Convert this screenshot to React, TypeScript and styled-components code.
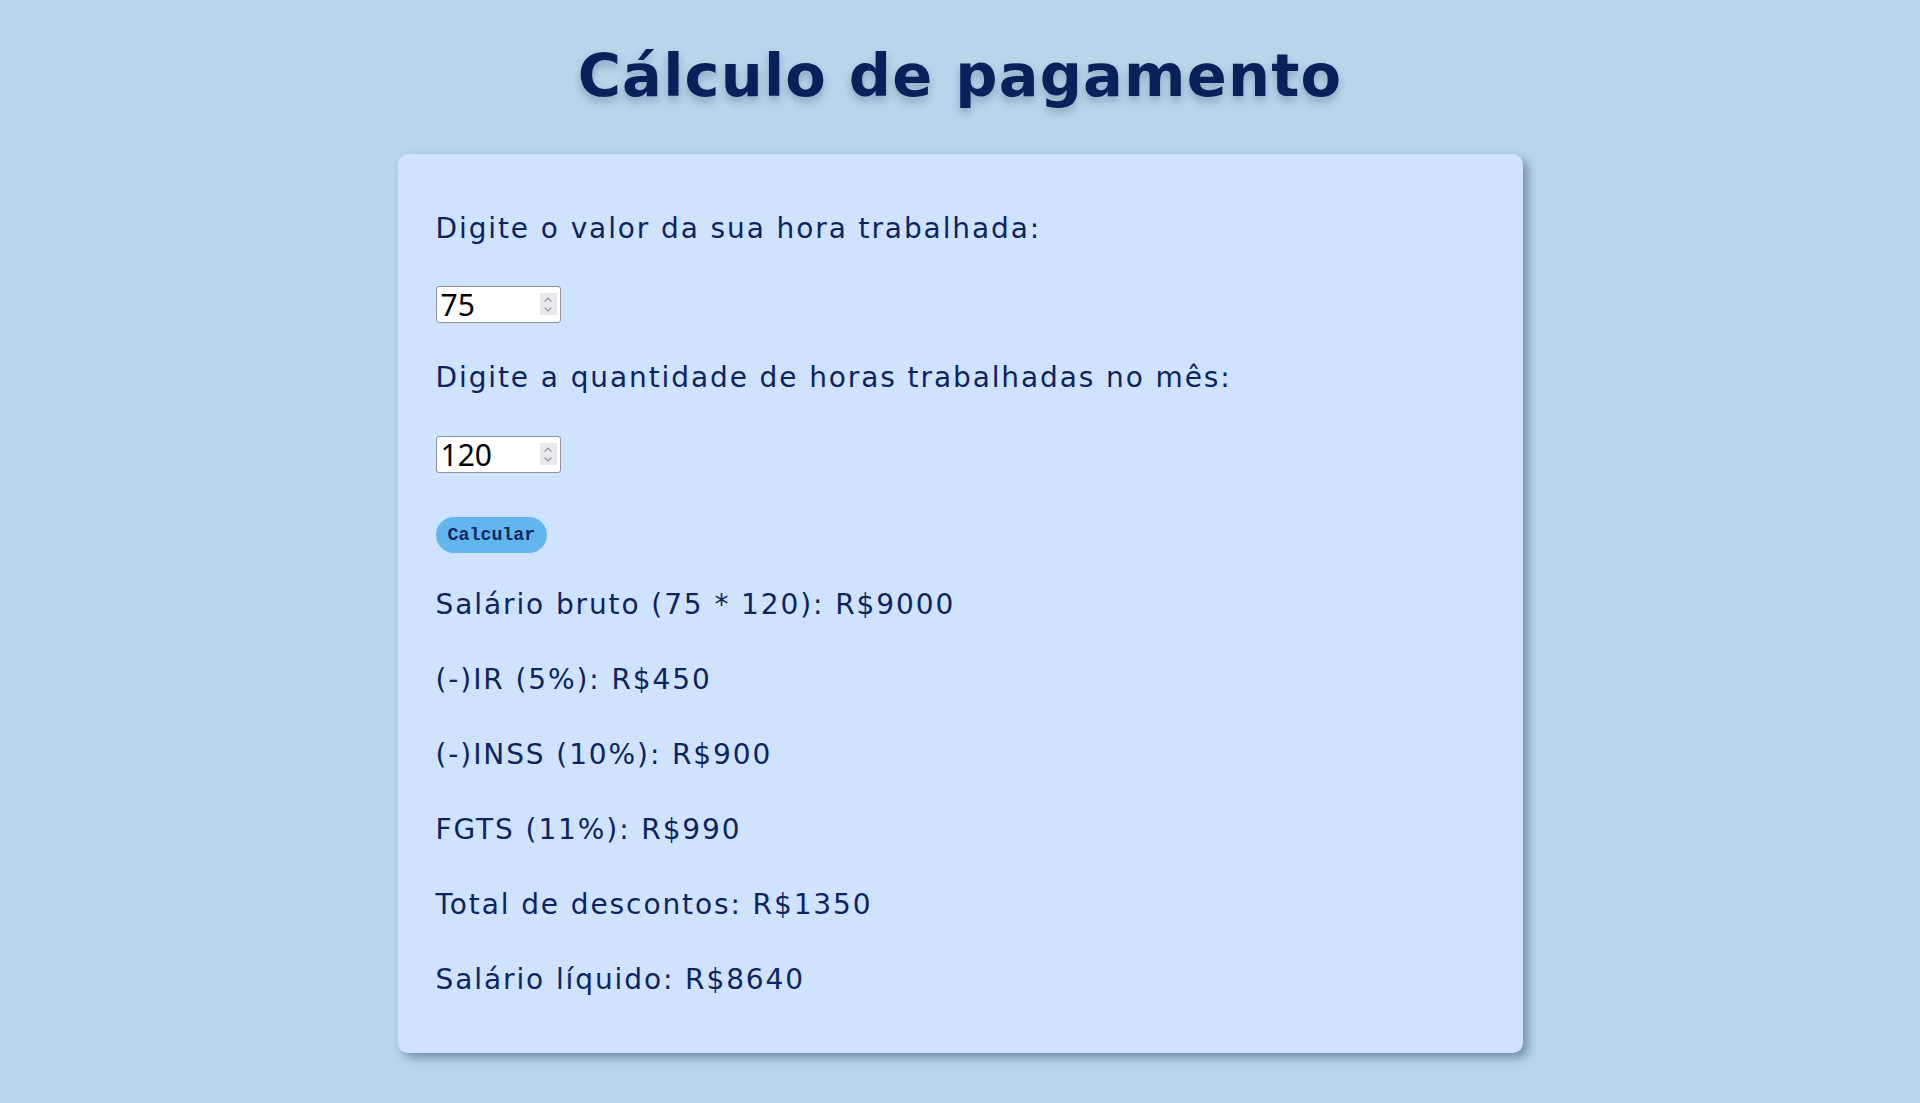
import React, { useState } from "react";
import styled, { createGlobalStyle } from "styled-components";

const GlobalStyle = createGlobalStyle`
  html, body {
    margin: 0;
    padding: 0;
    background: #b8d5ea;
  }
  body {
    font-family: "DejaVu Sans", sans-serif;
  }
`;

const Page = styled.div`
  min-height: 1103px;
  background: #b8d5ea;
  display: flex;
  flex-direction: column;
  align-items: center;
  padding-top: 30px;
  box-sizing: border-box;
`;

const Title = styled.h1`
  margin: 0;
  font-family: "DejaVu Sans", sans-serif;
  font-weight: bold;
  font-size: 59px;
  line-height: 92px;
  height: 92px;
  letter-spacing: 1.2px;
  color: #0b1f5b;
  text-shadow: 0 5px 8px rgba(20, 50, 90, 0.28);
`;

const Card = styled.section`
  width: 1125px;
  box-sizing: border-box;
  margin-top: 32px;
  padding: 58px 38px 56px;
  background: #cfe3fe;
  border-radius: 10px;
  box-shadow: 5px 5px 10px rgba(40, 60, 90, 0.45);
  display: flex;
  flex-direction: column;
  align-items: flex-start;
`;

const Text = styled.p<{ $gap?: number }>`
  margin: ${(p) => p.$gap ?? 0}px 0 0;
  font-family: "DejaVu Sans", sans-serif;
  font-size: 28px;
  line-height: 34px;
  letter-spacing: 1.9px;
  color: #0e2361;
`;

const InputWrap = styled.div<{ $gap?: number }>`
  position: relative;
  margin: ${(p) => p.$gap ?? 0}px 0 0;
  width: 125px;
  height: 37px;
`;

const NumberInput = styled.input`
  display: block;
  width: 125px;
  height: 37px;
  margin: 0;
  box-sizing: border-box;
  padding: 0 24px 0 4px;
  font-family: "Noto Sans", sans-serif;
  font-size: 30px;
  line-height: 35px;
  color: #000;
  background: #fff;
  border: 1px solid #8f8f9d;
  border-radius: 3px;
  outline: none;
  -moz-appearance: textfield;

  &::-webkit-inner-spin-button,
  &::-webkit-outer-spin-button {
    -webkit-appearance: none;
    margin: 0;
  }
`;

const Spinner = styled.span`
  position: absolute;
  top: 7px;
  right: 4px;
  width: 17px;
  height: 22px;
  background: #e9e9ed;
  border-radius: 1px;
  display: flex;
  flex-direction: column;
  align-items: center;
  justify-content: center;
  gap: 5px;
  pointer-events: none;
`;

const Chevron = ({ up }: { up?: boolean }) => (
  <svg width="8" height="5" viewBox="0 0 8 5" fill="none">
    <path
      d={up ? "M1 4.2 L4 1.2 L7 4.2" : "M1 0.8 L4 3.8 L7 0.8"}
      stroke="#8d8d98"
      strokeWidth="1.2"
      strokeLinecap="round"
      strokeLinejoin="round"
    />
  </svg>
);

const Button = styled.button`
  margin: 44px 0 0;
  height: 36px;
  padding: 0 12px;
  border: none;
  border-radius: 18px;
  background: #62b6ee;
  color: #10295c;
  font-family: "Liberation Mono", monospace;
  font-weight: bold;
  font-size: 18.3px;
  cursor: pointer;
`;

function NumberField({
  value,
  onChange,
  gap,
}: {
  value: string;
  onChange: (v: string) => void;
  gap: number;
}) {
  return (
    <InputWrap $gap={gap}>
      <NumberInput
        type="number"
        value={value}
        onChange={(e) => onChange(e.target.value)}
      />
      <Spinner>
        <Chevron up />
        <Chevron />
      </Spinner>
    </InputWrap>
  );
}

export default function App() {
  const [hora, setHora] = useState("75");
  const [horas, setHoras] = useState("120");
  const bruto = 9000;

  return (
    <>
      <GlobalStyle />
      <Page>
        <Title>Cálculo de pagamento</Title>
        <Card>
          <Text>Digite o valor da sua hora trabalhada:</Text>
          <NumberField gap={40} value={hora} onChange={setHora} />
          <Text $gap={38}>Digite a quantidade de horas trabalhadas no mês:</Text>
          <NumberField gap={41} value={horas} onChange={setHoras} />
          <Button>Calcular</Button>
          <Text $gap={35}>Salário bruto (75 * 120): R${bruto}</Text>
          <Text $gap={41}>(-)IR (5%): R$450</Text>
          <Text $gap={41}>(-)INSS (10%): R$900</Text>
          <Text $gap={41}>FGTS (11%): R$990</Text>
          <Text $gap={41}>Total de descontos: R$1350</Text>
          <Text $gap={41}>Salário líquido: R$8640</Text>
        </Card>
      </Page>
    </>
  );
}
